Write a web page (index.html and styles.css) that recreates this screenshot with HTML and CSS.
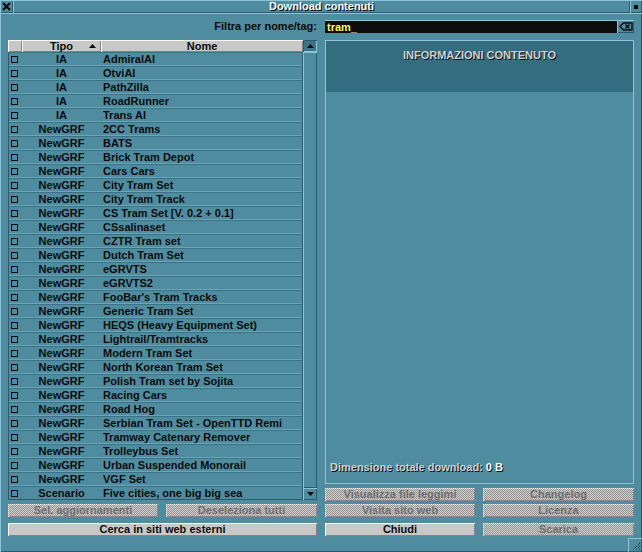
FILE: index.html
```html
<!DOCTYPE html>
<html lang="it">
<head>
<meta charset="utf-8">
<title>Download contenuti</title>
<link rel="stylesheet" href="styles.css">
</head>
<body>
<div class="window">
  <div class="titlebar">
    <div class="closebox">
      <svg width="9" height="9" viewBox="0 0 9 9"><path d="M1 1 L8 8 M8 1 L1 8" stroke="#0c0c0c" stroke-width="2.2" fill="none"/></svg>
    </div>
    <div class="caption">Download contenuti</div>
    <div class="stickybox"><span class="sq"></span></div>
  </div>
  <div class="content">
    <div class="col left">
      <div class="filter-label">Filtra per nome/tag:</div>
      <div class="listwrap">
        <div class="list">
          <div class="list-head">
            <div class="h h-check"></div>
            <div class="h h-type">Tipo<svg class="sort" width="7" height="4" viewBox="0 0 7 4"><path d="M3.5 0 L7 4 L0 4 Z" fill="#0c0c0c"/></svg></div>
            <div class="h h-name">Nome</div>
          </div>
          <div class="rows">
            <div class="row"><span class="c-check"><span class="cb"></span></span><span class="c-type">IA</span><span class="c-name">AdmiralAI</span></div>
            <div class="row"><span class="c-check"><span class="cb"></span></span><span class="c-type">IA</span><span class="c-name">OtviAI</span></div>
            <div class="row"><span class="c-check"><span class="cb"></span></span><span class="c-type">IA</span><span class="c-name">PathZilla</span></div>
            <div class="row"><span class="c-check"><span class="cb"></span></span><span class="c-type">IA</span><span class="c-name">RoadRunner</span></div>
            <div class="row"><span class="c-check"><span class="cb"></span></span><span class="c-type">IA</span><span class="c-name">Trans AI</span></div>
            <div class="row"><span class="c-check"><span class="cb"></span></span><span class="c-type">NewGRF</span><span class="c-name">2CC Trams</span></div>
            <div class="row"><span class="c-check"><span class="cb"></span></span><span class="c-type">NewGRF</span><span class="c-name">BATS</span></div>
            <div class="row"><span class="c-check"><span class="cb"></span></span><span class="c-type">NewGRF</span><span class="c-name">Brick Tram Depot</span></div>
            <div class="row"><span class="c-check"><span class="cb"></span></span><span class="c-type">NewGRF</span><span class="c-name">Cars Cars</span></div>
            <div class="row"><span class="c-check"><span class="cb"></span></span><span class="c-type">NewGRF</span><span class="c-name">City Tram Set</span></div>
            <div class="row"><span class="c-check"><span class="cb"></span></span><span class="c-type">NewGRF</span><span class="c-name">City Tram Track</span></div>
            <div class="row"><span class="c-check"><span class="cb"></span></span><span class="c-type">NewGRF</span><span class="c-name">CS Tram Set [V. 0.2 + 0.1]</span></div>
            <div class="row"><span class="c-check"><span class="cb"></span></span><span class="c-type">NewGRF</span><span class="c-name">CSsalinaset</span></div>
            <div class="row"><span class="c-check"><span class="cb"></span></span><span class="c-type">NewGRF</span><span class="c-name">CZTR Tram set</span></div>
            <div class="row"><span class="c-check"><span class="cb"></span></span><span class="c-type">NewGRF</span><span class="c-name">Dutch Tram Set</span></div>
            <div class="row"><span class="c-check"><span class="cb"></span></span><span class="c-type">NewGRF</span><span class="c-name">eGRVTS</span></div>
            <div class="row"><span class="c-check"><span class="cb"></span></span><span class="c-type">NewGRF</span><span class="c-name">eGRVTS2</span></div>
            <div class="row"><span class="c-check"><span class="cb"></span></span><span class="c-type">NewGRF</span><span class="c-name">FooBar's Tram Tracks</span></div>
            <div class="row"><span class="c-check"><span class="cb"></span></span><span class="c-type">NewGRF</span><span class="c-name">Generic Tram Set</span></div>
            <div class="row"><span class="c-check"><span class="cb"></span></span><span class="c-type">NewGRF</span><span class="c-name">HEQS (Heavy Equipment Set)</span></div>
            <div class="row"><span class="c-check"><span class="cb"></span></span><span class="c-type">NewGRF</span><span class="c-name">Lightrail/Tramtracks</span></div>
            <div class="row"><span class="c-check"><span class="cb"></span></span><span class="c-type">NewGRF</span><span class="c-name">Modern Tram Set</span></div>
            <div class="row"><span class="c-check"><span class="cb"></span></span><span class="c-type">NewGRF</span><span class="c-name">North Korean Tram Set</span></div>
            <div class="row"><span class="c-check"><span class="cb"></span></span><span class="c-type">NewGRF</span><span class="c-name">Polish Tram set by Sojita</span></div>
            <div class="row"><span class="c-check"><span class="cb"></span></span><span class="c-type">NewGRF</span><span class="c-name">Racing Cars</span></div>
            <div class="row"><span class="c-check"><span class="cb"></span></span><span class="c-type">NewGRF</span><span class="c-name">Road Hog</span></div>
            <div class="row"><span class="c-check"><span class="cb"></span></span><span class="c-type">NewGRF</span><span class="c-name">Serbian Tram Set - OpenTTD Remi</span></div>
            <div class="row"><span class="c-check"><span class="cb"></span></span><span class="c-type">NewGRF</span><span class="c-name">Tramway Catenary Remover</span></div>
            <div class="row"><span class="c-check"><span class="cb"></span></span><span class="c-type">NewGRF</span><span class="c-name">Trolleybus Set</span></div>
            <div class="row"><span class="c-check"><span class="cb"></span></span><span class="c-type">NewGRF</span><span class="c-name">Urban Suspended Monorail</span></div>
            <div class="row"><span class="c-check"><span class="cb"></span></span><span class="c-type">NewGRF</span><span class="c-name">VGF Set</span></div>
            <div class="row"><span class="c-check"><span class="cb"></span></span><span class="c-type">Scenario</span><span class="c-name">Five cities, one big big sea</span></div>
          </div>
        </div>
        <div class="scrollbar">
          <div class="sb-btn up"><svg width="7" height="4" viewBox="0 0 7 4"><path d="M3.5 0 L7 4 L0 4 Z" fill="#0c0c0c"/></svg></div>
          <div class="sb-track"><div class="sb-thumb"></div></div>
          <div class="sb-btn down"><svg width="7" height="4" viewBox="0 0 7 4"><path d="M0 0 L7 0 L3.5 4 Z" fill="#0c0c0c"/></svg></div>
        </div>
      </div>
      <div class="btnrow two b-first-left">
        <div class="btn disabled">Sel. aggiornamenti</div>
        <div class="btn disabled">Deseleziona tutti</div>
      </div>
      <div class="btnrow b-last">
        <div class="btn">Cerca in siti web esterni</div>
      </div>
    </div>
    <div class="col right">
      <div class="editrow">
        <div class="edit"><span class="typed">tram</span><span class="caret">_</span></div>
        <div class="clearbtn">
          <svg width="14" height="9" viewBox="0 0 14 9"><path d="M1 4.5 L4.5 1 H13 V8 H4.5 Z" fill="none" stroke="#0c0c0c" stroke-width="1.4"/><path d="M6.5 2.5 L10.5 6.5 M10.5 2.5 L6.5 6.5" stroke="#0c0c0c" stroke-width="1.4"/></svg>
        </div>
      </div>
      <div class="info">
        <div class="info-head">INFORMAZIONI CONTENUTO</div>
        <div class="info-body"></div>
        <div class="info-foot">Dimensione totale download: <span class="size">0 B</span></div>
      </div>
      <div class="btnrow two b-first-right">
        <div class="btn disabled">Visualizza file leggimi</div>
        <div class="btn disabled">Changelog</div>
      </div>
      <div class="btnrow two b-mid-right">
        <div class="btn disabled">Visita sito web</div>
        <div class="btn disabled">Licenza</div>
      </div>
      <div class="btnrow two b-last">
        <div class="btn">Chiudi</div>
        <div class="btn disabled">Scarica</div>
      </div>
    </div>
  </div>
  <div class="resize">
    <svg width="12" height="12" viewBox="0 0 12 12"><path d="M10 3 L3 10 M10 6 L6 10 M10 9 L9 10" stroke="#0c0c0c" stroke-width="1" stroke-dasharray="1 1" fill="none"/></svg>
  </div>
</div>
</body>
</html>
```

FILE: styles.css
```css
* { box-sizing: border-box; margin: 0; padding: 0; }

html, body {
  width: 642px;
  height: 552px;
  overflow: hidden;
}

body {
  background: #508ca0;
  font-family: "Liberation Sans", Arial, sans-serif;
  font-size: 11px;
  font-weight: bold;
  line-height: 13px;
  color: #0c0c0c;
}

.window {
  position: relative;
  width: 642px;
  height: 552px;
  display: flex;
  flex-direction: column;
  background: #508ca0;
}

/* title bar */
.titlebar {
  display: flex;
  height: 13px;
}

.closebox,
.caption,
.stickybox {
  background: #508ca0;
  box-shadow: inset 1px 1px 0 #8cc4d8, inset -1px -1px 0 #2c5c6c;
  display: flex;
  align-items: center;
  justify-content: center;
}

.closebox { width: 13px; }
.caption {
  flex: 1;
  color: #fcfcfc;
  text-shadow: 1px 1px 0 #000;
}
.stickybox { width: 12px; }
.sq {
  width: 4px;
  height: 4px;
  background: #0c0c0c;
}

/* content */
.content {
  flex: 1;
  display: flex;
  gap: 8px;
  padding: 7px 8px 0 8px;
  box-shadow: inset 1px 1px 0 #8cc4d8, inset -1px -1px 0 #2c5c6c;
}

.col {
  width: 309px;
  display: flex;
  flex-direction: column;
}

.filter-label {
  height: 13px;
  text-align: right;
  margin-bottom: 7px;
}

/* list */
.listwrap {
  display: flex;
  height: 460px;
}

.list {
  width: 295px;
  display: flex;
  flex-direction: column;
}

.list-head {
  display: flex;
  height: 12px;
}

.h {
  background: #c8c8c8;
  box-shadow: inset 1px 1px 0 #fcfcfc, inset -1px -1px 0 #848484;
  text-align: center;
  line-height: 12px;
  position: relative;
}

.h-check { width: 14px; }
.h-type { width: 79px; }
.h-name { flex: 1; }

.sort {
  position: absolute;
  right: 5px;
  top: 4px;
}

.rows {
  height: 448px;
  overflow: hidden;
  border-left: 1px solid #2c5c6c;
  border-right: 1px solid #2c5c6c;
  border-bottom: 1px solid #2c5c6c;
}

.row {
  display: flex;
  height: 14px;
  line-height: 12px;
  border-top: 1px solid #3a7286;
  border-bottom: 1px solid #6aa6b8;
  white-space: nowrap;
}

.c-check {
  width: 13px;
  display: flex;
  align-items: center;
  padding-left: 2px;
}

.cb {
  width: 7px;
  height: 7px;
  border: 1px solid #0c0c0c;
}

.c-type {
  width: 79px;
  text-align: center;
}

.c-name {
  flex: 1;
  padding-left: 2px;
  overflow: hidden;
}

/* scrollbar */
.scrollbar {
  width: 14px;
  display: flex;
  flex-direction: column;
}

.sb-btn {
  height: 12px;
  display: flex;
  align-items: center;
  justify-content: center;
  background: #508ca0;
  box-shadow: inset 1px 1px 0 #8cc4d8, inset -1px -1px 0 #2c5c6c;
}

.sb-btn.up {
  background: #3c7488;
  box-shadow: inset 1px 1px 0 #2c5c6c, inset -1px -1px 0 #8cc4d8;
}

.sb-track {
  flex: 1;
  display: flex;
  background: #508ca0;
}

.sb-thumb {
  flex: 1;
  box-shadow: inset 1px 1px 0 #8cc4d8, inset -1px -1px 0 #2c5c6c;
}

/* buttons */
.btnrow {
  display: flex;
  gap: 8px;
  height: 13px;
}

.b-first-left { margin-top: 4px; }
.b-first-right { margin-top: 4px; }
.b-mid-right { margin-top: 3px; }
.b-last { margin-top: 6px; }

.btnrow.two .btn { flex: none; width: 150px; }
.btnrow.two .btn:last-child { width: 151px; }

.btn {
  flex: 1;
  position: relative;
  background: #c8c8c8;
  box-shadow: inset 1px 1px 0 #fcfcfc, inset -1px -1px 0 #848484;
  text-align: center;
  line-height: 13px;
  color: #0c0c0c;
  white-space: nowrap;
  overflow: hidden;
}

.btn.disabled {
  color: #5c5c5c;
}

.btn.disabled::after {
  content: "";
  position: absolute;
  inset: 0;
  background: repeating-conic-gradient(rgba(140,140,140,0.75) 0 25%, transparent 0 50%) 0 0 / 2px 2px;
}

/* right side */
.editrow {
  display: flex;
  height: 13px;
  margin-bottom: 7px;
}

.edit {
  flex: 1;
  background: #0c0c0c;
  border-top: 1px solid #8cc4d8;
  padding-left: 2px;
  line-height: 12px;
}

.typed { color: #fcf46c; }
.caret { color: #fcfcfc; }

.clearbtn {
  width: 17px;
  display: flex;
  align-items: center;
  justify-content: center;
  background: #508ca0;
  box-shadow: inset 1px 1px 0 #8cc4d8, inset -1px -1px 0 #2c5c6c;
}

.info {
  height: 444px;
  display: flex;
  flex-direction: column;
  border: 1px solid #8cc4d8;
}

.info-head {
  height: 51px;
  background: #346c80;
  color: #d0d0d0;
  text-shadow: 1px 1px 0 #101010;
  text-align: center;
  padding-top: 8px;
}

.info-body { flex: 1; }

.info-foot {
  height: 22px;
  padding-left: 4px;
  color: #d0d0d0;
  text-shadow: 1px 1px 0 #101010;
}

.size { color: #fcfcfc; }

.resize {
  position: absolute;
  right: 0;
  bottom: 0;
  width: 14px;
  height: 14px;
  display: flex;
  align-items: flex-end;
  justify-content: flex-end;
  box-shadow: inset 1px 1px 0 #8cc4d8, inset -1px -1px 0 #2c5c6c;
}
```
